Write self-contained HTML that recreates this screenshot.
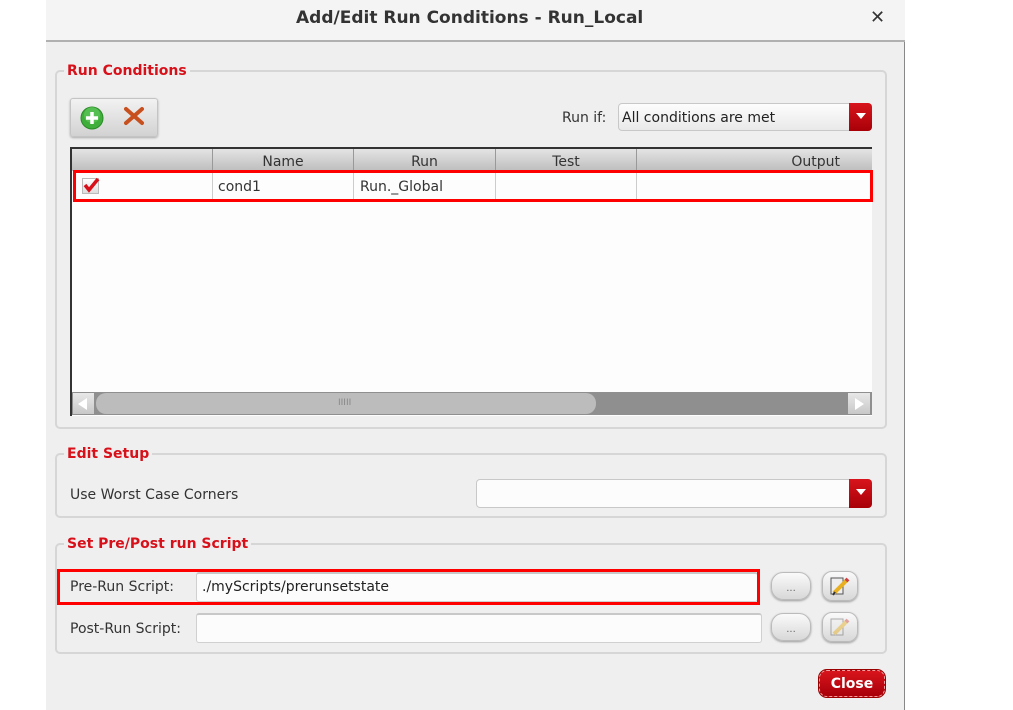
<!DOCTYPE html>
<html><head><meta charset="utf-8"><style>
*{box-sizing:border-box;margin:0;padding:0}
body{width:1013px;height:710px;background:#fff;font-family:"DejaVu Sans","Liberation Sans",sans-serif;font-size:14px;color:#333;position:relative;overflow:hidden}
.a{position:absolute}
.win{left:46px;top:0;width:859px;height:710px;background:#efefef;border-right:1px solid #888}
.title{left:46px;top:0;width:859px;height:42px;background:#f4f4f4;border-bottom:2px solid #b0b0b0}
.grp{border:2px solid #d6d6d6;border-radius:5px}
.gt{color:#d8101a;font-weight:bold;font-size:14px;background:#efefef;padding:0 3px}
.combo{background:linear-gradient(#fdfdfd,#e9e9e9);border:1px solid #c8c8c8;border-radius:4px}
.dd{background:linear-gradient(#d8141c,#a80008);border-radius:0 4px 4px 0}
.dd:after{content:"";position:absolute;left:7px;top:10px;border:5px solid transparent;border-top:6px solid #fff}
.inp{background:#fcfcfc;border:1px solid #d0d0d0;border-top:2px solid #c8c8c8;border-radius:3px}
.btn{background:linear-gradient(#fafafa,#d8d8d8);border:1px solid #bbb;border-radius:12px;box-shadow:0 1px 2px #999}
.red{border:3px solid #f00}
.hd{background:linear-gradient(#e4e4e4,#bdbdbd);top:149px;height:22px;text-align:center;font-size:14px;line-height:26px;color:#333;border-right:1px solid #999}
</style></head><body>
<div class="a win"></div>
<div class="a title"></div>
<div class="a" style="left:296px;top:8px;font-size:17px;font-weight:bold;color:#333">Add/Edit Run Conditions - Run_Local</div>
<div class="a" style="left:870px;top:7px;font-size:18px;font-weight:bold;color:#333">✕</div>

<!-- Run Conditions -->
<div class="a grp" style="left:55px;top:70px;width:832px;height:359px"></div>
<div class="a gt" style="left:64px;top:63px">Run Conditions</div>
<div class="a" style="left:70px;top:98px;width:88px;height:39px;background:linear-gradient(#f2f2f2,#d2d2d2);border:1px solid #c4c4c4;border-radius:3px;box-shadow:0 1px 2px #aaa"></div>
<svg class="a" style="left:79px;top:105px" width="26" height="26"><circle cx="13" cy="13" r="11" fill="#3fae3a" stroke="#2a8a28"/><circle cx="13" cy="10" r="8" fill="#6dd06a" opacity=".5"/><path d="M13 7v12M7 13h12" stroke="#fff" stroke-width="3.5"/></svg>
<svg class="a" style="left:123px;top:106px" width="22" height="20"><path d="M3 3L19 17M19 3L3 17" stroke="#c8501e" stroke-width="4" stroke-linecap="round"/></svg>
<div class="a" style="left:562px;top:110px">Run if:</div>
<div class="a combo" style="left:618px;top:103px;width:254px;height:28px"></div>
<div class="a" style="left:622px;top:110px;color:#222">All conditions are met</div>
<div class="a dd" style="left:849px;top:103px;width:23px;height:28px"></div>

<div class="a" style="left:70px;top:147px;width:802px;height:269px;background:#fdfdfd;border-top:2px solid #333;border-left:2px solid #333"></div>
<div class="a hd" style="left:72px;width:141px"></div>
<div class="a hd" style="left:213px;width:141px">Name</div>
<div class="a hd" style="left:354px;width:142px">Run</div>
<div class="a hd" style="left:496px;width:141px">Test</div>
<div class="a hd" style="left:637px;width:235px;text-align:right;padding-right:32px;border-right:none">Output</div>
<div class="a" style="left:212px;top:171px;width:1px;height:29px;background:#ccc"></div>
<div class="a" style="left:353px;top:171px;width:1px;height:29px;background:#ccc"></div>
<div class="a" style="left:495px;top:171px;width:1px;height:29px;background:#ccc"></div>
<div class="a" style="left:636px;top:171px;width:1px;height:29px;background:#ccc"></div>
<div class="a" style="left:82px;top:178px;width:17px;height:16px;background:linear-gradient(#fff,#ddd);border:1px solid #bbb"></div>
<svg class="a" style="left:82px;top:177px" width="18" height="16"><path d="M3 8l4 5 9-11" fill="none" stroke="#d8101a" stroke-width="3.5"/></svg>
<div class="a" style="left:218px;top:179px">cond1</div>
<div class="a" style="left:360px;top:179px">Run._Global</div>
<div class="a red" style="left:73px;top:170px;width:800px;height:32px"></div>
<div class="a" style="left:72px;top:392px;width:800px;height:23px;background:#8f8f8f"></div>
<div class="a" style="left:73px;top:393px;width:21px;height:21px;background:linear-gradient(#e8e8e8,#c8c8c8)"></div>
<svg class="a" style="left:76px;top:397px" width="14" height="14"><path d="M11 1L2 7l9 6z" fill="#fff"/></svg>
<div class="a" style="left:96px;top:393px;width:500px;height:21px;background:#bcbcbc;border-radius:10px"></div>
<div class="a" style="left:338px;top:398px;font-size:9px;color:#888">IIIII</div>
<div class="a" style="left:848px;top:393px;width:22px;height:21px;background:linear-gradient(#e8e8e8,#c8c8c8)"></div>
<svg class="a" style="left:852px;top:397px" width="14" height="14"><path d="M3 1l9 6-9 6z" fill="#fff"/></svg>

<!-- Edit Setup -->
<div class="a grp" style="left:55px;top:453px;width:832px;height:65px"></div>
<div class="a gt" style="left:64px;top:446px">Edit Setup</div>
<div class="a" style="left:70px;top:487px">Use Worst Case Corners</div>
<div class="a combo" style="left:476px;top:479px;width:396px;height:29px;background:#fcfcfc"></div>
<div class="a dd" style="left:849px;top:479px;width:23px;height:29px"></div>

<!-- Pre/Post -->
<div class="a grp" style="left:55px;top:543px;width:832px;height:111px"></div>
<div class="a gt" style="left:64px;top:536px">Set Pre/Post run Script</div>
<div class="a inp" style="left:196px;top:572px;width:562px;height:30px"></div>
<div class="a red" style="left:57px;top:569px;width:703px;height:36px"></div>
<div class="a" style="left:70px;top:579px">Pre-Run Script:</div>
<div class="a" style="left:202px;top:579px;color:#222">./myScripts/prerunsetstate</div>
<div class="a" style="left:70px;top:621px">Post-Run Script:</div>
<div class="a inp" style="left:196px;top:613px;width:566px;height:30px"></div>
<div class="a btn" style="left:771px;top:572px;width:40px;height:28px;text-align:center;font-size:10px;line-height:32px;color:#666">...</div>
<div class="a btn" style="left:771px;top:613px;width:40px;height:28px;text-align:center;font-size:10px;line-height:32px;color:#666">...</div>
<div class="a btn" style="left:822px;top:571px;width:36px;height:30px;border-radius:10px"></div>
<div class="a btn" style="left:822px;top:612px;width:36px;height:30px;border-radius:10px"></div>
<svg class="a" style="left:828px;top:575px" width="24" height="22"><rect x="3" y="3" width="12" height="16" fill="#eee" stroke="#555"/><path d="M6 18L19 5" stroke="#e8b020" stroke-width="4"/><path d="M18 6l2-2" stroke="#d04040" stroke-width="4"/><path d="M5 20l2-3" stroke="#333" stroke-width="2"/></svg>
<svg class="a" style="left:828px;top:616px;opacity:.45" width="24" height="22"><rect x="3" y="3" width="12" height="16" fill="#eee" stroke="#555"/><path d="M6 18L19 5" stroke="#e8b020" stroke-width="4"/><path d="M18 6l2-2" stroke="#d04040" stroke-width="4"/></svg>

<div class="a" style="left:819px;top:670px;width:66px;height:27px;background:linear-gradient(#d8141c,#a8000a);border-radius:8px;border:1px dashed #f0a0a0;outline:1px solid #900;color:#fff;font-weight:bold;font-size:14px;text-align:center;line-height:26px">Close</div>
</body></html>
